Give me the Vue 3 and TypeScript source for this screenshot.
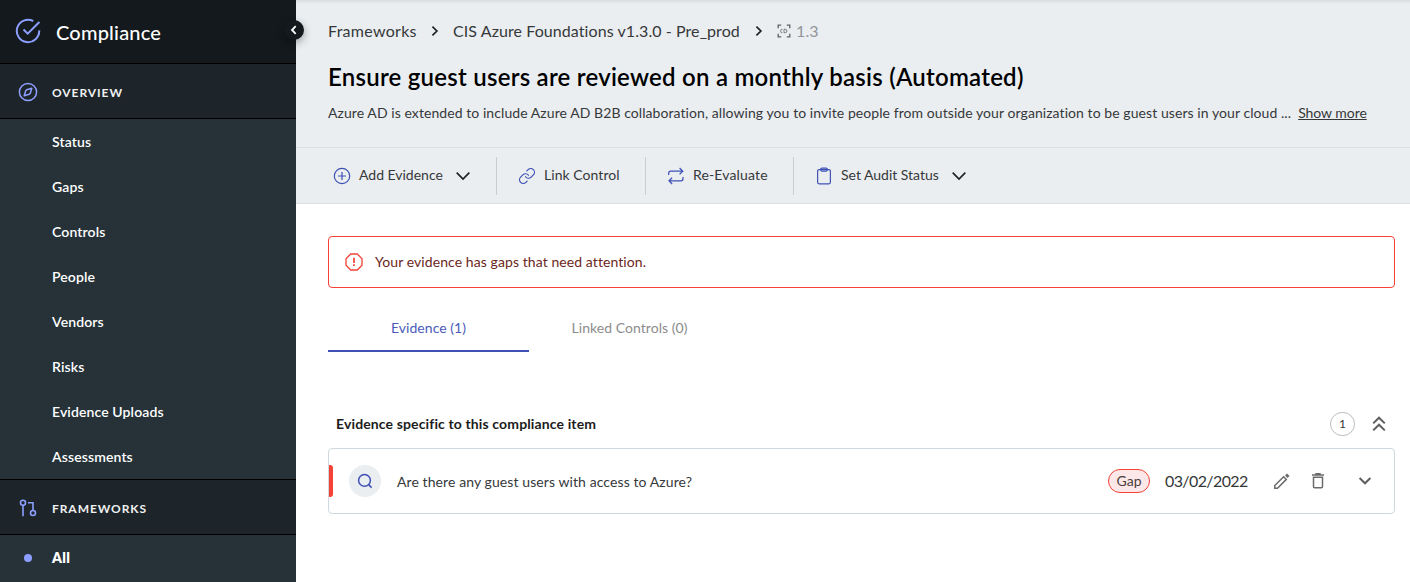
<script setup lang="ts">
const overviewItems: string[] = [
  'Status', 'Gaps', 'Controls', 'People', 'Vendors', 'Risks', 'Evidence Uploads', 'Assessments',
]
</script>

<template>
  <div class="app">
    <aside class="sidebar">
      <header class="brand">
        <svg class="brand-icon" width="26" height="26" viewBox="0 0 26 26" fill="none" stroke="#8c9eff" stroke-width="2">
          <path d="M18.2 3A11.2 11.2 0 1 0 24.2 12.4" />
          <path d="M8.5 11.5l4.2 4.2L24.4 4" />
        </svg>
        <span class="brand-name">Compliance</span>
        <button class="collapse" aria-label="Collapse sidebar">
          <svg width="20" height="20" viewBox="0 0 20 20" fill="none" stroke="#fff" stroke-width="1.8"><path d="M11.7 6.2L8 10l3.7 3.8" /></svg>
        </button>
      </header>
      <div class="section">
        <svg class="section-icon" width="20" height="20" viewBox="0 0 20 20" fill="none" stroke="#8c9eff" stroke-width="1.5">
          <circle cx="10" cy="10" r="8.6" />
          <path d="M13.8 6.2l-1.5 5.1-1 1-5.1 1.5 1.5-5.1 1-1z" stroke-linejoin="round" />
        </svg>
        <span>OVERVIEW</span>
      </div>
      <nav class="items">
        <a v-for="item in overviewItems" :key="item" class="item">{{ item }}</a>
      </nav>
      <div class="section frameworks">
        <svg class="section-icon" width="20" height="20" viewBox="0 0 20 20" fill="none" stroke="#8c9eff" stroke-width="1.6">
          <circle cx="5" cy="4.8" r="2.5" />
          <path d="M5 7.3v11M10 4.8h5v7.8" />
          <circle cx="15" cy="15" r="2.5" />
        </svg>
        <span>FRAMEWORKS</span>
      </div>
      <a class="item selected"><i class="dot"></i>All</a>
    </aside>

    <main class="main">
      <section class="heading">
        <nav class="crumbs">
          <span class="crumb-root">Frameworks</span>
          <svg class="crumb-arrow" width="10" height="12" viewBox="0 0 10 12" fill="none" stroke="#212121" stroke-width="1.7"><path d="M2.4 1.6L6.9 6l-4.5 4.4" /></svg>
          <span class="crumb-name">CIS Azure Foundations v1.3.0 - Pre_prod</span>
          <svg class="crumb-arrow" width="10" height="12" viewBox="0 0 10 12" fill="none" stroke="#212121" stroke-width="1.7"><path d="M2.4 1.6L6.9 6l-4.5 4.4" /></svg>
          <svg class="scan" width="14" height="14" viewBox="0 0 14 14" fill="none" stroke="#616161" stroke-width="1.3">
            <path d="M1.2 4.3V1.2h3M9.8 1.2h3v3.1M12.8 9.7v3.1h-3M4.2 12.8h-3V9.7" />
            <path d="M5.4 5.3h-.8q-.8 0-.8.8v1.8q0 .8.8.8h.8M7 5.3v3.4h1.4q1.5 0 1.5-1.7T8.4 5.3z" stroke-width=".8" />
          </svg>
          <span class="crumb-id">1.3</span>
        </nav>
        <h1>Ensure guest users are reviewed on a monthly basis (Automated)</h1>
        <p class="summary"><span>Azure AD is extended to include Azure AD B2B collaboration, allowing you to invite people from outside your organization to be guest users in your cloud ...</span><a class="more">Show more</a></p>
      </section>

      <section class="toolbar">
        <button class="tool add">
          <svg width="18" height="18" viewBox="0 0 18 18" fill="none" stroke="#3f51b5" stroke-width="1.2"><circle cx="9" cy="9" r="7.7" /><path d="M9 5v8M5 9h8" /></svg>
          <span>Add Evidence</span>
          <svg class="caret" width="16" height="10" viewBox="0 0 16 10" fill="none" stroke="#212121" stroke-width="1.7"><path d="M1.7 1.7L8 8l6.3-6.3" /></svg>
        </button>
        <button class="tool link">
          <svg width="18" height="18" viewBox="0 0 24 24" fill="none" stroke="#3f51b5" stroke-width="1.6" stroke-linecap="round">
            <path d="M10 13a5 5 0 0 0 7.54.54l3-3a5 5 0 0 0-7.07-7.07l-1.72 1.71" />
            <path d="M14 11a5 5 0 0 0-7.54-.54l-3 3a5 5 0 0 0 7.07 7.07l1.71-1.71" />
          </svg>
          <span>Link Control</span>
        </button>
        <button class="tool evaluate">
          <svg width="18" height="18" viewBox="0 0 18 18" fill="none" stroke="#3f51b5" stroke-width="1.25">
            <path d="M1.7 8V6.2q0-2 2-2h12M12.6 1l3.2 3.2-3.2 3.1M16 10v1.8q0 2-2 2H2M5.1 10.7L2 13.8 5.1 17" />
          </svg>
          <span>Re-Evaluate</span>
        </button>
        <button class="tool audit">
          <svg width="18" height="18" viewBox="0 0 18 18" fill="none" stroke="#3f51b5" stroke-width="1.2">
            <rect x="2.6" y="2.6" width="12.8" height="14.2" rx="1.5" /><rect x="5.8" y="1.1" width="6.4" height="3" rx="1" />
          </svg>
          <span>Set Audit Status</span>
          <svg class="caret" width="16" height="10" viewBox="0 0 16 10" fill="none" stroke="#212121" stroke-width="1.7"><path d="M1.7 1.7L8 8l6.3-6.3" /></svg>
        </button>
      </section>

      <div class="alert">
        <svg width="18" height="18" viewBox="0 0 18 18" fill="none" stroke="#f44336" stroke-width="1.3">
          <path d="M5.7 1h6.6L17 5.7v6.6L12.3 17H5.7L1 12.3V5.7z" /><path d="M9 4.8v5.1M9 11.3v1.8" stroke-width="1.7" />
        </svg>
        <span>Your evidence has gaps that need attention.</span>
      </div>

      <div class="tabs">
        <div class="tab active">Evidence (1)</div>
        <div class="tab">Linked Controls (0)</div>
      </div>

      <section class="group-head">
        <h2>Evidence specific to this compliance item</h2>
        <span class="count">1</span>
        <svg width="14" height="16" viewBox="0 0 14 16" fill="none" stroke="#5f5f5f" stroke-width="2"><path d="M1.2 7.4L7 1.7l5.8 5.7M1.2 14.4L7 8.7l5.8 5.7" /></svg>
      </section>

      <article class="evidence">
        <i class="stripe"></i>
        <span class="badge">
          <svg width="16" height="16" viewBox="0 0 16 16" fill="none" stroke="#3f51b5" stroke-width="1.5"><circle cx="7.5" cy="7.4" r="5.9" /><path d="M11.6 11.6l3 3" /></svg>
        </span>
        <span class="question">Are there any guest users with access to Azure?</span>
        <span class="gap">Gap</span>
        <time class="date">03/02/2022</time>
        <svg class="pencil" width="18" height="18" viewBox="0 0 18 18" fill="none" stroke="#6b6b6b" stroke-width="1.5">
          <path d="M1.8 16.2v-2.7l8.8-8.8 2.7 2.7-8.8 8.8z" /><path d="M12 3.6l2-2 2.5 2.5-2 2z" fill="#6b6b6b" stroke="none" />
        </svg>
        <svg class="trash" width="14" height="18" viewBox="0 0 14 18" fill="none" stroke="#6b6b6b" stroke-width="1.5">
          <path d="M1 3h12M4.3 1.7h5.4M2.5 5.2v9.3q0 1.2 1.2 1.2h6.6q1.2 0 1.2-1.2V5.2z" />
        </svg>
        <svg class="expand" width="14" height="10" viewBox="0 0 14 10" fill="none" stroke="#5f5f5f" stroke-width="2"><path d="M1.6 2L7 7.3 12.4 2" /></svg>
      </article>
    </main>
  </div>
</template>

<style>
body { margin: 0; overflow: hidden; background: #fff; }
</style>

<style scoped>
* { box-sizing: border-box; }
.app { display: flex; width: 1410px; height: 582px; overflow: hidden; font-family: Lato, "Liberation Sans", sans-serif; font-size: 14px; letter-spacing: 0.15px; color: #212121; }
svg { display: block; flex: none; }
button { border: 0; padding: 0; background: none; font: inherit; letter-spacing: inherit; color: inherit; }
.sidebar { position: relative; z-index: 1; width: 296px; flex: none; background: #263238; color: #fff; }
.brand { position: relative; display: flex; align-items: center; height: 64px; padding: 0 0 2px 15px; background: #14191d; border-bottom: 1px solid #000; }
.brand-name { margin: 3px 0 0 15px; font-size: 20px; font-weight: 500; line-height: 24px; letter-spacing: 0.2px; }
.collapse { position: absolute; left: 284px; top: 20px; width: 20px; height: 20px; border-radius: 50%; background: #14191d; box-shadow: 0 3px 8px rgba(0, 0, 0, 0.35); }
.section { display: flex; align-items: center; height: 55px; padding: 1px 0 0 18px; gap: 14px; background: #1d252b; border-bottom: 1px solid #000; font-size: 12px; font-weight: 700; letter-spacing: 0.93px; color: #f0f0f0; }
.section span { padding-top: 2px; }
.frameworks { height: 56px; border-top: 1px solid #000; }
.items { height: 360px; }
.item { display: flex; align-items: center; height: 45px; padding: 0 0 1px 52px; font-weight: 600; letter-spacing: 0.12px; }
.selected { padding: 0 0 0 24px; font-weight: 800; letter-spacing: 0.3px; }
.dot { width: 8px; height: 8px; margin-right: 20px; border-radius: 50%; background: #8c9eff; }
.main { flex: 1; min-width: 0; color: #36383a; letter-spacing: 0.05px; }
.heading { height: 148px; padding: 19px 0 0 32px; background: linear-gradient(#d9dddf, #eaeef1 4px); border-bottom: 1px solid #dde1e4; }
.crumbs { display: flex; align-items: center; height: 24px; font-size: 16px; }
.crumbs span { padding-bottom: 2px; }
.crumb-root { width: 88px; letter-spacing: 0.28px; }
.crumb-name { width: 287px; letter-spacing: 0.08px; }
.crumb-arrow { margin: 0 13px 0 14px; }
.crumb-id { margin-left: 5px; color: #919599; letter-spacing: 0.1px; }
h1 { margin: 18px 0 0; font-size: 24px; line-height: 32px; font-weight: 600; letter-spacing: 0.24px; color: #000; }
.summary { display: flex; margin: 10px 0 0; line-height: 20px; letter-spacing: 0.07px; white-space: nowrap; }
.more { margin-left: 7px; text-decoration: underline; letter-spacing: -0.05px; }
.toolbar { display: flex; align-items: center; height: 56px; padding-left: 37px; background: #eaeef1; border-bottom: 1px solid #dde1e4; }
.tool { display: flex; align-items: center; height: 38px; }
.tool + .tool { border-left: 1px solid #c9cdd0; padding-left: 21px; }
.tool span { margin-left: 8px; padding-bottom: 3px; }
.add span, .audit span { letter-spacing: -0.01px; }
.evaluate span { letter-spacing: 0.15px; }
.caret { margin-left: 12px; }
.add { width: 163px; }
.link { width: 149px; }
.evaluate { width: 148px; }
.alert { display: flex; align-items: center; gap: 12px; width: 1067px; height: 52px; margin: 32px 0 0 32px; padding-left: 16px; border: 1px solid #f44336; border-radius: 4px; color: #6a2721; letter-spacing: 0.08px; }
.alert span { padding-bottom: 1px; }
.tabs { display: flex; margin: 16px 0 0 32px; height: 48px; }
.tab { display: flex; align-items: center; justify-content: center; width: 201px; border-bottom: 2px solid transparent; color: #8c8c8c; }
.active { color: #4a5bba; border-color: #3f51b5; }
.group-head { display: flex; align-items: center; height: 48px; width: 1067px; margin: 48px 0 0 32px; padding: 0 9px 0 8px; }
h2 { flex: 1; margin: 0; padding-bottom: 1px; font-size: 14px; font-weight: 700; letter-spacing: 0.13px; color: #1c1c1c; }
.count { display: flex; align-items: center; justify-content: center; width: 25px; height: 24px; margin-right: 17px; padding-bottom: 1px; border: 1px solid #bdbdbd; border-radius: 12px; font-size: 12px; }
.evidence { display: flex; align-items: center; width: 1067px; height: 66px; margin-left: 32px; border: 1px solid #cfd8dc; border-radius: 4px; }
.stripe { width: 4px; height: 32px; background: #f44336; border-radius: 0 3px 3px 0; }
.badge { display: flex; align-items: center; justify-content: center; width: 32px; height: 32px; margin-left: 16px; border-radius: 50%; background: #eaeef1; }
.question { flex: 1; margin-left: 16px; padding-top: 1px; letter-spacing: 0.09px; }
.gap { display: flex; align-items: center; justify-content: center; width: 42px; height: 24px; padding-bottom: 2px; border: 1px solid #f44336; border-radius: 12px; background: #fce8e8; color: #4a4040; }
.date { width: 83px; margin-left: 15px; font-size: 16px; line-height: 20px; letter-spacing: -0.6px; }
.pencil { margin-left: 25px; }
.trash { margin-left: 20px; }
.expand { margin: 0 22px 0 33px; }
</style>
